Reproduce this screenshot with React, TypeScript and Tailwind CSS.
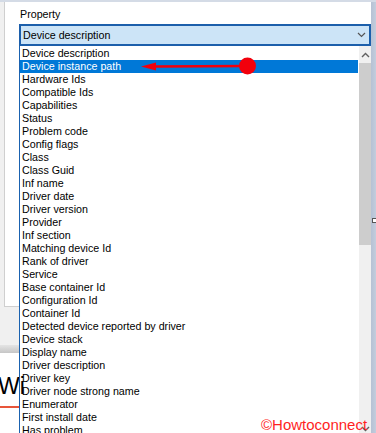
import React from "react";

const items = [
  "Device description",
  "Device instance path",
  "Hardware Ids",
  "Compatible Ids",
  "Capabilities",
  "Status",
  "Problem code",
  "Config flags",
  "Class",
  "Class Guid",
  "Inf name",
  "Driver date",
  "Driver version",
  "Provider",
  "Inf section",
  "Matching device Id",
  "Rank of driver",
  "Service",
  "Base container Id",
  "Configuration Id",
  "Container Id",
  "Detected device reported by driver",
  "Device stack",
  "Display name",
  "Driver description",
  "Driver key",
  "Driver node strong name",
  "Enumerator",
  "First install date",
  "Has problem",
];

const selected = 1;

const App = () => {
  return (
    <div className="relative flex h-[433px] w-[376px] flex-col overflow-hidden bg-white font-['Liberation_Sans',Arial,sans-serif] text-black">
      <div className="h-[2px] bg-[#d4dbe6]" />
      <div className="flex min-h-0 flex-1">
        {/* edge of the dialog behind the dropdown */}
        <div className="flex w-[19px] flex-col">
          <div className="flex h-[305px]">
            <div className="w-[4px] bg-[#f0f0f0]" />
            <div className="flex-1 border-b border-l border-[#cfcfcf] bg-white" />
          </div>
          <div className="h-[38px] bg-[#f0f0f0]" />
          <div className="h-[8px] bg-gradient-to-b from-[#e4e4e4] to-[#c6c6c6]" />
          <div className="flex-1 bg-white">
            <div className="-ml-[2px] mt-[22px] whitespace-nowrap text-[23px] leading-[23px]">Wi</div>
            <div className="mt-[8px] h-[2px] bg-[#e8553a]" />
          </div>
        </div>

        {/* property picker */}
        <div className="flex w-[352px] flex-col">
          <div className="h-[22px] pl-[1px] pt-[6px] text-[10.7px] leading-[13px]">Property</div>
          <div className="flex h-[22px] items-center justify-between border-2 border-[#1c5fab] bg-[#cce4f7] px-[2px] text-[10.7px] leading-[13px]">
            <span>Device description</span>
            <svg width="9" height="6" viewBox="0 0 9 6" className="mr-[1px]">
              <path d="M1 1l3.5 3.5L8 1" fill="none" stroke="#555" strokeWidth="1.2" />
            </svg>
          </div>
          <div className="flex min-h-0 flex-1">
            <div className="flex-1 border-l border-[#1a62b0] pr-[1px] pt-[1px] text-[10.7px] leading-[13px]">
              {items.map((item, i) => (
                <div
                  key={item}
                  className={
                    i === selected
                      ? "h-[13px] whitespace-nowrap bg-[#0078d7] pl-[2px] text-white"
                      : "h-[13px] whitespace-nowrap pl-[2px]"
                  }
                >
                  {item}
                </div>
              ))}
            </div>
            {/* scrollbar */}
            <div className="flex w-[12px] flex-col bg-[#f0f0f0] pt-[1px]">
              <div className="flex h-[16px] items-center justify-center">
                <svg width="9" height="6" viewBox="0 0 9 6">
                  <path d="M1 5l3.5-3.5L8 5" fill="none" stroke="#606060" strokeWidth="1.4" />
                </svg>
              </div>
              <div className="h-[182px] bg-[#cdcdcd]" />
              <div className="flex flex-1 flex-col items-center justify-end pb-[1px]">
                <svg width="9" height="6" viewBox="0 0 9 6">
                  <path d="M1 1l3.5 3.5L8 1" fill="none" stroke="#606060" strokeWidth="1.4" />
                </svg>
              </div>
            </div>
          </div>
        </div>

        {/* frame of the window behind */}
        <div className="flex w-[5px] flex-col bg-gradient-to-r from-[#b6c1d4] to-[#c3cddd]">
          <div className="ml-[1px] mt-[216px] h-[5px] border border-r-0 border-[#555] bg-white" />
        </div>
      </div>

      {/* annotation arrow */}
      <svg className="pointer-events-none absolute left-0 top-0" width="376" height="433">
        <line x1="154" y1="66.5" x2="247" y2="66" stroke="#f2000c" strokeWidth="2.5" />
        <polygon points="141,66.5 156,62.5 156,70.5" fill="#f2000c" />
        <circle cx="247.5" cy="66" r="8.5" fill="#f2000c" />
      </svg>

      <div className="absolute left-[261px] top-[417px] whitespace-nowrap text-[15px] leading-[15px] text-[#ff1f1f]">
        ©Howtoconnect
      </div>
    </div>
  );
};

export default App;
